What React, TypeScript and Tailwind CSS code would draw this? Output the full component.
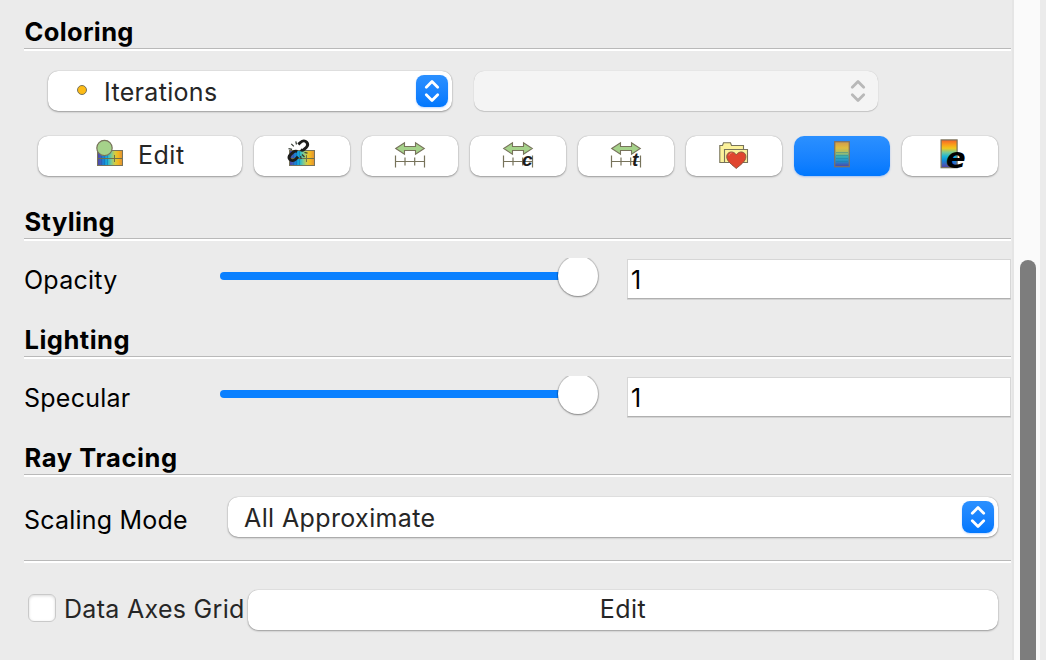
import React from "react";

const raised =
  "rounded-[10px] bg-white shadow-[0_0_1px_rgba(0,0,0,0.35),0_1px_2px_rgba(0,0,0,0.32)]";

function Rule() {
  return (
    <div className="h-[3px] w-[987px] shrink-0 border-b-2 border-white bg-[#b9b9b9]" />
  );
}

function Heading({ children, className }: { children: string; className: string }) {
  return (
    <div className="flex h-[51px] shrink-0 flex-col justify-end">
      <h2 className={`h-8 whitespace-nowrap pl-[0.5px] text-[25.5px] font-bold leading-8 text-black ${className}`}>
        {children}
      </h2>
      <Rule />
    </div>
  );
}

function Chevrons({ color }: { color: string }) {
  return (
    <svg width="32" height="32" viewBox="0 0 32 32" fill="none" stroke={color} strokeWidth="2.8" strokeLinecap="round" strokeLinejoin="round">
      <path d="M10.3 12.3 16 6.600l5.700 5.700M10.300 19.700 16 25.400l5.700-5.700" />
    </svg>
  );
}

function Stepper() {
  return (
    <div className="h-8 w-8 shrink-0 rounded-[8px] bg-gradient-to-b from-[#2b90ff] to-[#0077fe] shadow-[0_1px_2px_rgba(0,100,255,0.25)]">
      <Chevrons color="#fff" />
    </div>
  );
}

function Spectrum({ id, vertical = false }: { id: string; vertical?: boolean }) {
  return (
    <linearGradient id={id} x1="0" x2={vertical ? "0" : "1"} y1={vertical ? "1" : "0"} y2="0">
      <stop offset="0" stopColor="#5440a2" />
      <stop offset=".12" stopColor="#4160b8" />
      <stop offset=".25" stopColor="#1587d8" />
      <stop offset=".4" stopColor="#19b5d8" />
      <stop offset=".55" stopColor="#79c996" />
      <stop offset=".7" stopColor={vertical ? "#f0c81c" : "#d8cd3e"} />
      <stop offset=".84" stopColor={vertical ? "#fb9a1a" : "#f3b51f"} />
      <stop offset="1" stopColor={vertical ? "#f2602b" : "#df8f35"} />
    </linearGradient>
  );
}

function MapBox({ id }: { id: string }) {
  return (
    <g>
      <defs>
        <Spectrum id={id} />
      </defs>
      <rect x="1.500" y="12.500" width="25" height="15" fill={`url(#${id})`} stroke="#77735b" />
      <path d="M5.500 13v14M8.500 13v14M11.500 13v14" stroke="#2159a0" strokeWidth=".7" opacity=".6" />
      <path d="M2 20.500h24M18.500 17v7" stroke="#6f7049" fill="none" />
    </g>
  );
}

function EditMapIcon() {
  return (
    <svg width="28" height="30" viewBox="0 0 28 30">
      <MapBox id="edit-map" />
      <circle cx="8.500" cy="10" r="7.700" fill="#a5d28a" stroke="#77735b" strokeWidth="1.200" />
    </svg>
  );
}

function UnlinkIcon() {
  return (
    <svg width="28" height="30" viewBox="0 0 28 30" className="overflow-visible">
      <MapBox id="link-map" />
      <g fill="none" stroke="#1d1d1b" strokeWidth="2.900">
        <path d="M10.300 6.400 12.700 4.200c2-1.800 4.500-1.600 6 0 1.500 1.800 1 3.900-.6 5.400l-2.300 2c-1 .8-2 .8-3.200.2" />
        <path d="M9.300 13.400c-1.500-.6-2.900-.2-4 .7l-2.600 2.300c-1.700 1.600-2.200 3.600-.8 5.200 1.500 1.600 4.100 1.200 5.700-.3l2.400-2.600" />
      </g>
      <path d="m3.300 5.800 2.500 2.500M7.800 3.300l.7 3.200M.5 10.700l3.600.6M14 16.500l2.500 2.500M16.500 14.500l3 .6M12.500 18l.7 3" stroke="#333a32" strokeWidth="1.200" />
    </svg>
  );
}

function RangeIcon({ letter, x = 0 }: { letter?: string; x?: number }) {
  return (
    <svg width="32" height="28" viewBox="0 0 32 28">
      <path d="M1.700 7.500 10.500 1.700v3.800h11V1.700l8.800 5.800-8.800 5.800V9.500h-11v3.800z" fill="#a5d28a" stroke="#77735b" strokeWidth="1.100" />
      <path d="M1.500 14.500v12M11 16.500v8M20.700 16.500v8M30.500 14.500v12M1.500 20.500h29" stroke="#77735b" strokeWidth="1.200" fill="none" />
      {letter && (
        <text x={x} y="25" fontFamily="Liberation Sans" fontSize="19" fontWeight="700" fontStyle="italic" fill="#1c1c1c">
          {letter}
        </text>
      )}
    </svg>
  );
}

function FavoriteIcon() {
  return (
    <svg width="32" height="28" viewBox="0 0 32 28">
      <g fill="#fcf29b" stroke="#77735b" strokeWidth="1.100">
        <path d="M1.800 21.500v-17h2.700l1-2.800h7l1 2.800h12v17z" />
        <path d="M6.500 21.500v-13h23v13z" />
      </g>
      <path d="M18.300 27.500C14.500 24 8.700 20.500 8.700 15.700c0-5.600 7.300-6.300 9.600-1.700 2.300-4.600 9.600-3.900 9.600 1.700 0 4.800-5.800 8.300-9.600 11.800z" fill="#e0452e" stroke="#8a5a42" strokeWidth="1" />
      <path d="M11 14.500c.3-1.700 1.500-2.500 2.700-2.600" stroke="#f08a78" fill="none" />
    </svg>
  );
}

function ColorBarIcon() {
  return (
    <svg width="16" height="27" viewBox="0 0 16 27">
      <defs>
        <linearGradient id="bar" x1="0" x2="0" y1="0" y2="1">
          <stop offset="0" stopColor="#cf9a4e" />
          <stop offset=".25" stopColor="#dfbd3f" />
          <stop offset=".45" stopColor="#a3bd69" />
          <stop offset=".6" stopColor="#35adb5" />
          <stop offset=".8" stopColor="#2188cf" />
          <stop offset="1" stopColor="#5440a2" />
        </linearGradient>
      </defs>
      <rect x=".7" y=".7" width="14.600" height="25" fill="url(#bar)" stroke="#7d7265" strokeWidth="1.300" />
      <path d="M2 11.500h12M2 14.500h12M2 17.500h12M2 20.500h12" stroke="#187d9e" strokeWidth=".7" opacity=".6" />
    </svg>
  );
}

function EditBarIcon() {
  return (
    <svg width="32" height="36" viewBox="0 0 32 36" className="overflow-visible">
      <defs>
        <Spectrum id="edit-bar" vertical />
      </defs>
      <rect x="7.100" y="3.900" width="16" height="27.800" fill="url(#edit-bar)" stroke="#77735b" strokeWidth="1.200" />
      <text x="12" y="31.500" fontFamily="DejaVu Sans" fontSize="29" fontWeight="700" fontStyle="italic" fill="#000">
        e
      </text>
    </svg>
  );
}

function ToolButton({ children, active = false }: { children: React.ReactNode; active?: boolean }) {
  return (
    <button
      className={
        active
          ? "flex h-10 w-24 justify-center rounded-[10px] bg-gradient-to-b from-[#2b90ff] to-[#0077fe] shadow-[0_1px_2px_rgba(0,100,255,0.3)]"
          : `flex h-10 w-24 justify-center ${raised}`
      }
    >
      {children}
    </button>
  );
}

function SliderRow({ label }: { label: string }) {
  return (
    <div className="flex h-[67px] shrink-0 items-start pt-[17px]">
      <label className="mt-[6px] w-[196px] whitespace-nowrap leading-8 text-black">{label}</label>
      <div className="flex h-[43px] w-[380px] items-start overflow-hidden">
        <div className="mt-[14px] h-2 w-[340px] shrink-0 rounded-l-full bg-[#0a80ff]" />
        <div className="-ml-[2px] -mt-[2px] h-10 w-10 shrink-0 rounded-full bg-white shadow-[0_0_1px_1px_rgba(0,0,0,0.18),0_1px_2px_rgba(0,0,0,0.3)]" />
      </div>
      <div className="ml-[27px] mt-[1px] flex h-[40px] w-[384px] border border-[#d6d6d6] border-b-[#b0b0b0] bg-white pl-[3px] leading-[40px] text-black shadow-[0_1px_0_rgba(0,0,0,0.1)]">
        1
      </div>
    </div>
  );
}

export default function App() {
  return (
    <div className="flex h-[660px] w-[1046px] overflow-hidden bg-[#ebebeb] font-['Inter',sans-serif] text-[25px] tracking-[0.25px] text-[#262626]">
      <main className="flex w-[1012px] shrink-0 flex-col pl-6">
        <Heading className="tracking-[0.35px]">Coloring</Heading>
        <section className="h-[139px] shrink-0 pt-5">
          <div className="flex gap-[22px] pl-6">
            <div className={`flex h-10 w-[404px] items-center pr-1 ${raised}`}>
              <span className="-mt-[2px] ml-[29px] h-[10px] w-[10px] rounded-full border border-[#77735b] bg-[#fdbb16]" />
              <span className="ml-[17px] flex-1 pt-[2px] leading-10 tracking-[0.32px]">Iterations</span>
              <Stepper />
            </div>
            <div className="flex h-10 w-[404px] items-center justify-end rounded-[10px] bg-[#f4f4f4] pr-1 shadow-[0_0_1px_rgba(0,0,0,0.2),0_1px_1px_rgba(0,0,0,0.15)]">
              <Chevrons color="#b8b8b8" />
            </div>
          </div>
          <div className="mt-[25px] flex gap-3 pl-[14px]">
            <button className={`flex h-10 w-[204px] pl-[58px] ${raised}`}>
              <span className="mt-[2px]"><EditMapIcon /></span>
              <span className="ml-[14px] leading-[38px] tracking-[0.5px]">Edit</span>
            </button>
            <ToolButton><span className="mt-[2px]"><UnlinkIcon /></span></ToolButton>
            <ToolButton><span className="mt-[5px]"><RangeIcon /></span></ToolButton>
            <ToolButton><span className="mt-[5px]"><RangeIcon letter="c" x={20} /></span></ToolButton>
            <ToolButton><span className="mt-[5px]"><RangeIcon letter="t" x={22} /></span></ToolButton>
            <ToolButton><span className="mt-[5px]"><FavoriteIcon /></span></ToolButton>
            <ToolButton active><span className="mt-[5px]"><ColorBarIcon /></span></ToolButton>
            <ToolButton><span className="mt-0"><EditBarIcon /></span></ToolButton>
          </div>
        </section>
        <Heading className="tracking-[0.4px]">Styling</Heading>
        <SliderRow label="Opacity" />
        <Heading className="tracking-[0.5px]">Lighting</Heading>
        <SliderRow label="Specular" />
        <Heading className="tracking-[0.6px]">Ray Tracing</Heading>
        <section className="flex h-[83px] shrink-0 items-start pt-5">
          <label className="mt-[7px] w-[204px] whitespace-nowrap leading-8 tracking-[0.2px] text-black">Scaling Mode</label>
          <div className={`flex h-10 w-[770px] items-center pl-4 pr-1 ${raised}`}>
            <span className="flex-1 pt-[2px] leading-10 tracking-[0.38px]">All Approximate</span>
            <Stepper />
          </div>
        </section>
        <Rule />
        <section className="flex items-start pl-1 pt-[27px]">
          <span className="mt-1 h-7 w-7 shrink-0 rounded-[6px] border border-[#c9c9c9] bg-white shadow-[inset_0_1px_3px_rgba(0,0,0,0.15)]" />
          <label className="ml-2 w-[184px] shrink-0 whitespace-nowrap leading-[38px] tracking-[0.3px]">Data Axes Grid</label>
          <button className={`flex h-10 w-[750px] shrink-0 justify-center leading-[38px] tracking-[0.5px] ${raised}`}>Edit</button>
        </section>
      </main>
      <aside className="flex w-7 shrink-0 border-l-2 border-[#e5e5e5] bg-[#fafafa] pl-[6px] pt-[260px]">
        <div className="h-[420px] w-4 rounded-full bg-[#7d7d7d]" />
      </aside>
    </div>
  );
}
